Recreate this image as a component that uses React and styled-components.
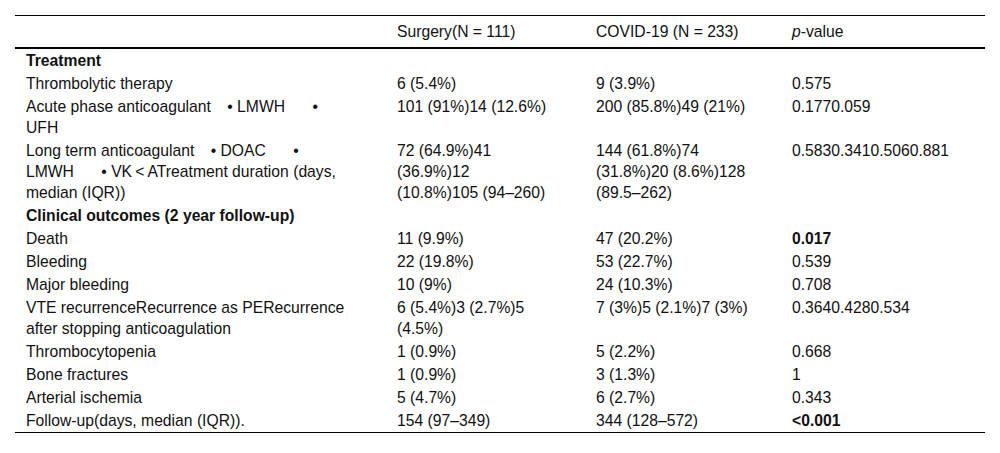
import React from "react";
import styled, { createGlobalStyle } from "styled-components";

const GlobalStyle = createGlobalStyle`
  body {
    margin: 0;
    background: #fff;
    font-family: "Liberation Sans", Arial, sans-serif;
    color: #111;
  }
`;

const Wrapper = styled.div`
  padding: 15px 15px 0 15px;
`;

const Frame = styled.div`
  width: 970px;
  border-top: 1px solid #000;
  border-bottom: 1px solid #000;
`;

const Table = styled.table`
  width: 100%;
  border-collapse: collapse;
  table-layout: fixed;
  font-size: 15.7px;
  line-height: 21px;
`;

const HeadCell = styled.th`
  text-align: left;
  font-weight: normal;
  padding: 5px 28px 5px 11px;
  border-bottom: 2px solid #000;
  vertical-align: top;
  white-space: nowrap;
`;

const Cell = styled.td`
  padding: 1px ${(props) => props.padRight || 28}px 1px 11px;
  vertical-align: top;
  font-weight: ${(props) => (props.bold ? "bold" : "normal")};
`;

const Bullet = styled.span`
  margin-left: 12px;
  margin-right: ${(props) => (props.last ? "0" : "11px")};
`;

const rows = [
  { section: "Treatment" },
  { label: "Thrombolytic therapy", a: "6 (5.4%)", b: "9 (3.9%)", p: "0.575" },
  {
    label: (
      <>
        Acute phase anticoagulant <Bullet>• LMWH</Bullet> <Bullet>• UFH</Bullet>
      </>
    ),
    a: "101 (91%)14 (12.6%)",
    b: "200 (85.8%)49 (21%)",
    p: "0.1770.059",
  },
  {
    label: (
      <>
        Long term anticoagulant <Bullet>• DOAC</Bullet> <Bullet>• LMWH</Bullet>{" "}
        <Bullet last>• VK{"\u2009"}&lt;{"\u2009"}A</Bullet>Treatment duration
        (days, median (IQR))
      </>
    ),
    a: "72 (64.9%)41 (36.9%)12 (10.8%)105 (94–260)",
    b: "144 (61.8%)74 (31.8%)20 (8.6%)128 (89.5–262)",
    p: "0.5830.3410.5060.881",
  },
  { section: "Clinical outcomes (2 year follow-up)" },
  { label: "Death", a: "11 (9.9%)", b: "47 (20.2%)", p: "0.017", bold: true },
  { label: "Bleeding", a: "22 (19.8%)", b: "53 (22.7%)", p: "0.539" },
  { label: "Major bleeding", a: "10 (9%)", b: "24 (10.3%)", p: "0.708" },
  {
    label: "VTE recurrenceRecurrence as PERecurrence after stopping anticoagulation",
    a: "6 (5.4%)3 (2.7%)5 (4.5%)",
    b: "7 (3%)5 (2.1%)7 (3%)",
    p: "0.3640.4280.534",
  },
  { label: "Thrombocytopenia", a: "1 (0.9%)", b: "5 (2.2%)", p: "0.668" },
  { label: "Bone fractures", a: "1 (0.9%)", b: "3 (1.3%)", p: "1" },
  { label: "Arterial ischemia", a: "5 (4.7%)", b: "6 (2.7%)", p: "0.343" },
  {
    label: "Follow-up(days, median (IQR)).",
    a: "154 (97–349)",
    b: "344 (128–572)",
    p: "<0.001",
    bold: true,
  },
];

const App = () => {
  return (
    <Wrapper>
      <GlobalStyle />
      <Frame>
        <Table>
          <colgroup>
            <col style={{ width: 371 }} />
            <col style={{ width: 199 }} />
            <col style={{ width: 196 }} />
            <col style={{ width: 204 }} />
          </colgroup>
          <thead>
            <tr>
              <HeadCell />
              <HeadCell>Surgery(N = 111)</HeadCell>
              <HeadCell>COVID-19 (N = 233)</HeadCell>
              <HeadCell>
                <i>p</i>-value
              </HeadCell>
            </tr>
          </thead>
          <tbody>
            {rows.map((row, i) =>
              row.section ? (
                <tr key={i}>
                  <Cell padRight={38} bold>
                    {row.section}
                  </Cell>
                  <Cell />
                  <Cell />
                  <Cell />
                </tr>
              ) : (
                <tr key={i}>
                  <Cell padRight={38}>{row.label}</Cell>
                  <Cell padRight={34}>{row.a}</Cell>
                  <Cell>{row.b}</Cell>
                  <Cell bold={row.bold}>{row.p}</Cell>
                </tr>
              )
            )}
          </tbody>
        </Table>
      </Frame>
    </Wrapper>
  );
};

export default App;
